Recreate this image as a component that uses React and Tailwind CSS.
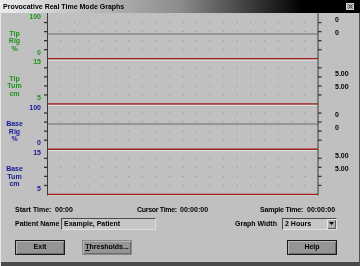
const GREEN = 'text-[#1a961a]'
const BLUE = 'text-[#16169a]'

const GRAPHS = [
  { top: '100', bottom: '0', name: ['Tip', 'Rig', '%'], color: GREEN },
  { top: '15', bottom: '5', name: ['Tip', 'Tum', 'cm'], color: GREEN },
  { top: '100', bottom: '0', name: ['Base', 'Rig', '%'], color: BLUE },
  { top: '15', bottom: '5', name: ['Base', 'Tum', 'cm'], color: BLUE },
]

const BLOCK = 45.25
const AX_L = 3.5
const AX_R = 274
const COL = 13.55

function Chart() {
  const dots = []
  const ticks = []
  for (let b = 0; b < 4; b++) {
    for (let j = 1; j <= 4; j++) {
      const y = 0.5 + BLOCK * b + 9.05 * j
      ticks.push(y)
      for (let i = 1; i <= 19; i++) {
        dots.push(<rect key={`${b}-${j}-${i}`} x={AX_L + COL * i - 0.5} y={y - 0.5} width="1" height="1" fill="#8c8c8c" />)
      }
    }
  }
  const reds = [45.75, 91, 136.25, 181.5]

  return (
    <svg width="278" height="183" className="shrink-0">
      {dots}
      {[21, 111].map((y) => (
        <line key={y} x1={AX_L} x2={AX_R} y1={y} y2={y} stroke="#6c6c6c" strokeWidth="1.2" />
      ))}
      {reds.map((y) => (
        <g key={y}>
          <line x1={AX_L} x2={AX_R} y1={y} y2={y} stroke="#a21f1f" strokeWidth="1.5" />
          <line x1={AX_L} x2={AX_R} y1={y + 1.3} y2={y + 1.3} stroke="#e2f2ee" strokeWidth="0.8" />
        </g>
      ))}
      {ticks.map((y) => (
        <g key={y}>
          <line x1="0" x2={AX_L} y1={y} y2={y} stroke="#333" strokeWidth="1.3" />
          <line x1={AX_R} x2={AX_R + 3.5} y1={y} y2={y} stroke="#333" strokeWidth="1.3" />
        </g>
      ))}
      <line x1={AX_L} x2={AX_L} y1="0" y2="182.5" stroke="#3a3a3a" strokeWidth="1" />
      <line x1={AX_R} x2={AX_R} y1="0" y2="182.5" stroke="#3a3a3a" strokeWidth="1" />
    </svg>
  )
}

function LeftLabels() {
  return (
    <div className="flex w-[44px] shrink-0 saturate-[1.01]">
      <div className="w-[29px] pt-[0.5px]">
        {GRAPHS.map((g, i) => (
          <div key={i} className={`h-[45.25px] pt-[16px] text-center leading-[7.5px] ${g.color}`}>
            {g.name.map((n) => (
              <div key={n}>{n}</div>
            ))}
          </div>
        ))}
      </div>
      <div className="w-[12px]">
        {GRAPHS.map((g, i) => (
          <div key={i} className={`flex h-[45.25px] flex-col justify-between pb-[1.5px] text-right ${g.color}`}>
            <div>{g.top}</div>
            <div>{g.bottom}</div>
          </div>
        ))}
      </div>
    </div>
  )
}

function RightValues() {
  return (
    <div className="flex flex-col pl-[13px] grayscale">
      <div className="mt-[3px]">0</div>
      <div className="mt-[5px]">0</div>
      <div className="mt-[33px]">5.00</div>
      <div className="mt-[5px]">5.00</div>
      <div className="mt-[20px]">0</div>
      <div className="mt-[5px]">0</div>
      <div className="mt-[19.7px]">5.00</div>
      <div className="mt-[5.3px]">5.00</div>
    </div>
  )
}

function Button({ children, dark }) {
  return (
    <button
      type="button"
      className={`flex h-[14.5px] w-[50px] items-center justify-center border bg-[#959595] shadow-[inset_1px_1px_0_#b4b4b4,inset_-1px_-1px_0_#6a6a6a] ${
        dark ? 'border-[#1a1a1a]' : 'border-[#8a8a8a]'
      }`}
    >
      {children}
    </button>
  )
}

export default function App() {
  return (
    <div className="relative h-[266px] w-[360px] overflow-hidden bg-[#c0c0c0] font-['Liberation_Sans',Arial,sans-serif] text-[7px] leading-[8px] font-bold whitespace-nowrap text-black antialiased shadow-[inset_1px_0_0_#e8e8e8,inset_-1px_0_0_#505050,inset_0_-4px_0_#4a4a4a]">
      <div className="flex h-[13px] items-center bg-[linear-gradient(to_right,#ededed,#8c8c8c_50%,#000_84%)] pl-[3px] grayscale">
        <span>Provocative Real Time Mode Graphs</span>
        <div className="mr-[6px] ml-auto flex h-[7px] w-[8px] items-center justify-center border border-[#d0d0d0] bg-[#a8a8a8]">
          <svg width="5" height="5" viewBox="0 0 5 5">
            <path d="M0.5 0.5L4.5 4.5M4.5 0.5L0.5 4.5" stroke="#444" strokeWidth="1" />
          </svg>
        </div>
      </div>

      <div className="flex h-[183px]">
        <LeftLabels />
        <Chart />
        <RightValues />
      </div>

      <div className="flex flex-col grayscale">
        <div className="mt-[9px] flex h-[10px] items-center pl-[15px]">
          <div className="flex w-[122px]">
            <span className="w-[40px]">Start Time:</span>
            <span>00:00</span>
          </div>
          <div className="flex w-[123px]">
            <span className="w-[43px] tracking-[-0.3px]">Cursor Time:</span>
            <span>00:00:00</span>
          </div>
          <div className="flex">
            <span className="w-[47px] tracking-[-0.2px]">Sample Time:</span>
            <span>00:00:00</span>
          </div>
        </div>

        <div className="mt-[2.5px] flex h-[12.5px] items-center pl-[15px]">
          <span className="w-[46px]">Patient Name</span>
          <div className="flex h-[12px] w-[95px] items-center border border-t-[#4a4a4a] border-r-[#e0e0e0] border-b-[#e0e0e0] border-l-[#4a4a4a] bg-[#c6c6c6] pl-[2px]">
            Example, Patient
          </div>
          <span className="ml-[79px] w-[47px]">Graph Width</span>
          <div className="flex h-[12.5px] w-[55px] items-center border border-t-[#4a4a4a] border-r-[#e0e0e0] border-b-[#e0e0e0] border-l-[#4a4a4a] bg-[#c6c6c6] pl-[2px]">
            <span>2 Hours</span>
            <div className="ml-auto flex h-full w-[9px] items-center justify-center bg-[#b0b0b0] shadow-[inset_1px_1px_0_#e6e6e6,inset_-1px_-1px_0_#5a5a5a]">
              <svg width="5" height="3" viewBox="0 0 5 3">
                <path d="M0 0H5L2.5 3Z" fill="#000" />
              </svg>
            </div>
          </div>
        </div>

        <div className="mt-[10px] flex pl-[15px]">
          <Button dark>Exit</Button>
          <div className="ml-[17px]">
            <Button>
              <span>
                <span className="underline">T</span>hresholds...
              </span>
            </Button>
          </div>
          <div className="ml-[155px]">
            <Button dark>Help</Button>
          </div>
        </div>
      </div>
    </div>
  )
}
